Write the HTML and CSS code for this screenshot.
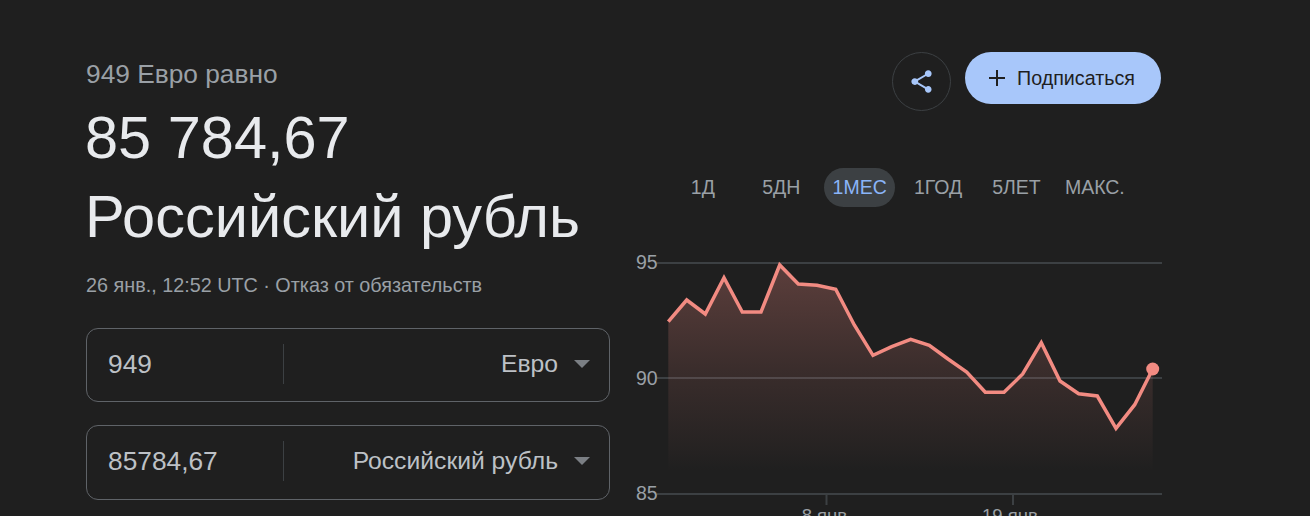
FILE: index.html
```html
<!DOCTYPE html>
<html>
<head>
    <title>949 Евро равно</title>
    <link rel="stylesheet" href="styles.css">
</head>
<body>
    <div class="container">
        <div class="left">
            <div class="label">949 Евро равно</div>
            <div class="result">85 784,67</div>
            <div class="result">Российский рубль</div>
            <div class="note">26 янв., 12:52 UTC · Отказ от обязательств</div>

            <div class="field">
                <div class="amount">949</div>
                <div class="currency">Евро</div>
                <div class="arrow"></div>
            </div>
            <div class="field field-second">
                <div class="amount">85784,67</div>
                <div class="currency">Российский рубль</div>
                <div class="arrow"></div>
            </div>
        </div>

        <div class="right">
            <div class="actions">
                <div class="share">
                    <svg width="27" height="27" viewBox="0 0 24 24"><path fill="#a8c7fa" d="M18 16.08c-.76 0-1.44.3-1.96.77L8.91 12.7c.05-.23.09-.46.09-.7s-.04-.47-.09-.7l7.05-4.11c.54.5 1.25.81 2.04.81 1.66 0 3-1.34 3-3s-1.34-3-3-3-3 1.34-3 3c0 .24.04.47.09.7L8.04 9.81C7.5 9.31 6.79 9 6 9c-1.66 0-3 1.34-3 3s1.34 3 3 3c.79 0 1.5-.31 2.04-.81l7.12 4.16c-.05.21-.08.43-.08.65 0 1.61 1.31 2.92 2.92 2.92s2.92-1.31 2.92-2.92-1.31-2.92-2.92-2.92z"/></svg>
                </div>
                <div class="subscribe">
                    <svg width="24" height="24" viewBox="0 0 24 24"><path fill="#1f1f1f" d="M20 13h-7v7h-2v-7H4v-2h7V4h2v7h7z"/></svg>
                    <span>Подписаться</span>
                </div>
            </div>

            <div class="tabs">
                <div class="tab"><span>1Д</span></div>
                <div class="tab"><span>5ДН</span></div>
                <div class="tab active"><span>1МЕС</span></div>
                <div class="tab"><span>1ГОД</span></div>
                <div class="tab"><span>5ЛЕТ</span></div>
                <div class="tab"><span>МАКС.</span></div>
            </div>

            <svg class="chart" width="540" height="270" viewBox="625 250 540 270">
                <defs>
                    <linearGradient id="fade" x1="0" y1="265" x2="0" y2="472" gradientUnits="userSpaceOnUse">
                        <stop offset="0" stop-color="#f28b82" stop-opacity="0.29"/>
                        <stop offset="0.5" stop-color="#f28b82" stop-opacity="0.13"/>
                        <stop offset="0.9" stop-color="#f28b82" stop-opacity="0.03"/>
                        <stop offset="1" stop-color="#f28b82" stop-opacity="0"/>
                    </linearGradient>
                </defs>

                <line class="grid" x1="657" y1="263" x2="1162" y2="263"/>
                <line class="grid" x1="657" y1="378" x2="1162" y2="378"/>
                <line class="grid" x1="657" y1="494" x2="1162" y2="494"/>
                <line class="grid" x1="826.5" y1="494" x2="826.5" y2="505"/>
                <line class="grid" x1="1013" y1="494" x2="1013" y2="505"/>

                <path fill="url(#fade)" d="M668.3 321.7 686.7 300 705.3 314 724 277.7 742.3 312 761 312 779.7 265 798.3 284 817 285.3 835.7 289.3 854.3 325 873 355.3 891.7 346.7 910.7 339.3 929.3 345.3 948 359 966.7 372 985.3 392.3 1004 392.3 1022.7 374 1041.3 342.7 1060 381 1078.7 393.7 1097.3 396 1116 428.3 1134.7 404.7 1152.7 369V472H668.3z"/>

                <text class="axis" x="636" y="269">95</text>
                <text class="axis" x="636" y="385">90</text>
                <text class="axis" x="636" y="500">85</text>
                <text class="axis tick" x="827" y="522" text-anchor="middle">8 янв.</text>
                <text class="axis tick" x="1012.5" y="522" text-anchor="middle">19 янв.</text>

                <polyline class="line" points="668.3,321.7 686.7,300 705.3,314 724,277.7 742.3,312 761,312 779.7,265 798.3,284 817,285.3 835.7,289.3 854.3,325 873,355.3 891.7,346.7 910.7,339.3 929.3,345.3 948,359 966.7,372 985.3,392.3 1004,392.3 1022.7,374 1041.3,342.7 1060,381 1078.7,393.7 1097.3,396 1116,428.3 1134.7,404.7 1152.7,369"/>
                <circle cx="1152.7" cy="369" r="6.5" fill="#f28b82"/>
            </svg>
        </div>
    </div>
</body>
</html>
```

FILE: styles.css
```css
html, body {
    margin: 0;
    padding: 0;
    height: 100%;
    overflow: hidden;
    background-color: #1f1f1f;
}
body {
    font-family: 'Liberation Sans', Arial, sans-serif;
}
.container {
    display: flex;
    height: 516px;
    overflow: hidden;
    padding-left: 86px;
    box-sizing: border-box;
}
.left {
    width: 524px;
    margin-right: 15px;
    padding-top: 56px;
}
.label {
    font-size: 26.3px;
    line-height: 36px;
    margin-bottom: 6px;
    color: #9aa0a6;
}
.result {
    font-size: 59.5px;
    line-height: 79px;
    color: #e8eaed;
    margin-left: -1px;
}
.note {
    font-size: 19.8px;
    line-height: 30px;
    margin-top: 14px;
    color: #9aa0a6;
}
.field {
    display: flex;
    align-items: center;
    height: 74px;
    margin-top: 28px;
    padding-bottom: 3px;
    border: 1px solid #5f6368;
    border-radius: 12px;
    box-sizing: border-box;
}
.field-second {
    height: 75px;
    margin-top: 23px;
}
.amount {
    width: 175px;
    height: 40px;
    line-height: 40px;
    padding-left: 21px;
    border-right: 1px solid #3c4043;
    font-size: 26.3px;
    color: #bdc1c6;
}
.currency {
    flex: 1;
    text-align: right;
    font-size: 24.7px;
    color: #bdc1c6;
}
.arrow {
    width: 0;
    height: 0;
    margin: 0 19px 0 16px;
    border-left: 8px solid transparent;
    border-right: 8px solid transparent;
    border-top: 8px solid #7b7f84;
}
.right {
    width: 540px;
}
.actions {
    display: flex;
    justify-content: flex-end;
    gap: 14px;
    padding: 52px 4px 0 0;
    height: 116px;
    box-sizing: border-box;
}
.share {
    display: flex;
    align-items: center;
    justify-content: center;
    width: 59px;
    height: 59px;
    border: 1px solid #3c4043;
    border-radius: 50%;
    box-sizing: border-box;
}
.subscribe {
    display: flex;
    align-items: center;
    gap: 8px;
    width: 196px;
    height: 52px;
    padding-left: 20px;
    border-radius: 26px;
    background: #a8c7fa;
    box-sizing: border-box;
    font-size: 19.7px;
    color: #1f1f1f;
}
.tabs {
    display: grid;
    grid-template-columns: repeat(6, 78.4px);
    margin-top: 52px;
    margin-left: 38.7px;
    height: 82px;
}
.tab {
    text-align: center;
    font-size: 19.5px;
    line-height: 39px;
    color: #9aa0a6;
}
.tab span {
    display: inline-block;
    padding: 0 8.5px;
    height: 39px;
    border-radius: 20px;
}
.tab.active span {
    background: #3c4043;
    color: #8ab4f8;
}
.chart {
    display: block;
}
.grid {
    stroke: #3c4043;
    stroke-width: 2;
}
.axis {
    font-size: 19.5px;
    fill: #9aa0a6;
}
.tick {
    font-size: 18.5px;
}
.line {
    fill: none;
    stroke: #f28b82;
    stroke-width: 3.5;
}
```
